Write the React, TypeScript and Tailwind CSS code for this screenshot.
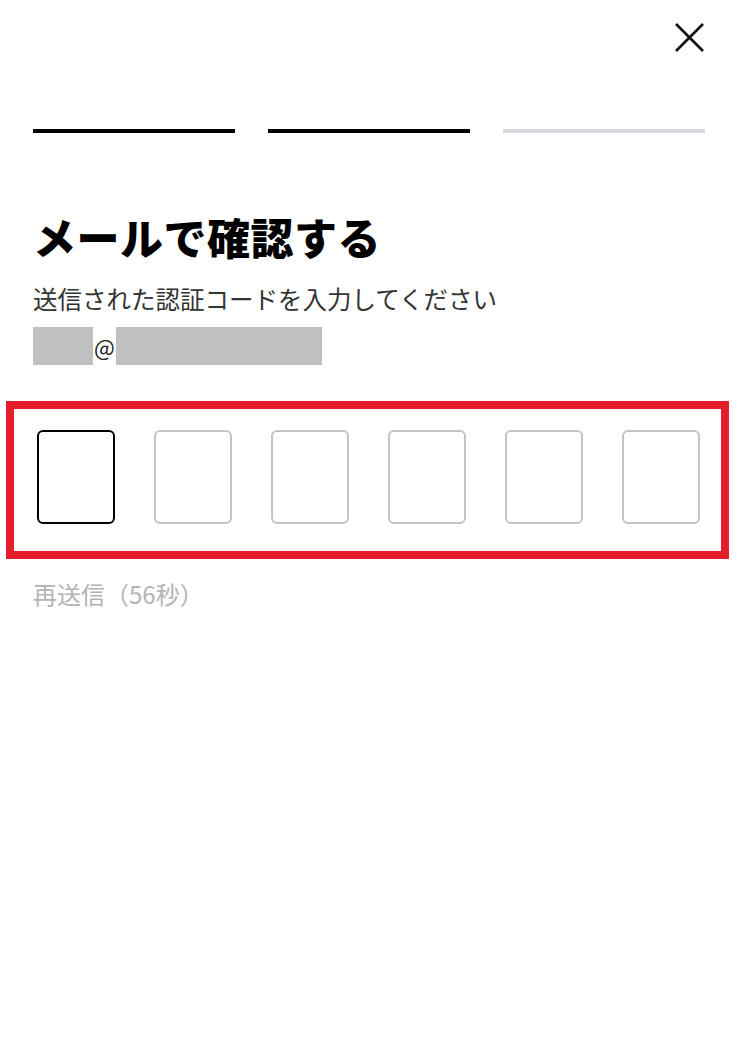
import React from 'react';

const STEPS = [true, true, false];
const CODE_LENGTH = 6;

const CloseIcon: React.FC = () => (
    <svg width="29" height="29" viewBox="0 0 29 29" fill="none" stroke="#111" strokeWidth="2.6" strokeLinecap="butt">
        <path d="M1 1 L28 28" />
        <path d="M28 1 L1 28" />
    </svg>
);

const App: React.FC = () => {
    return (
        <div
            className="min-h-screen w-full bg-white"
            style={{ fontFamily: '"Noto Sans CJK JP", "Noto Sans", sans-serif' }}
        >
            {/* header */}
            <div className="flex justify-end pt-[23px] pr-[34px]">
                <button aria-label="閉じる" className="p-0">
                    <CloseIcon />
                </button>
            </div>

            {/* step progress */}
            <div className="mt-[77px] flex gap-[33px] px-[33px]">
                {STEPS.map((done, i) => (
                    <div key={i} className={`h-[4px] w-[202px] ${done ? 'bg-black' : 'bg-[#d8dce2]'}`} />
                ))}
            </div>

            <div className="px-[33px] pt-[77px]">
                <h1 className="text-[43px] font-black leading-[52px] tracking-[0.5px] text-black">
                    メールで確認する
                </h1>
                <p className="mt-[22px] text-[24.5px] leading-[30px] text-[#333]">
                    送信された認証コードを入力してください
                </p>
                <div className="mt-[13px] flex items-center">
                    <span className="h-[38px] w-[60px] bg-[#c0c0c0]" />
                    <span className="w-[23px] text-center text-[22px] leading-[38px] text-[#222]">@</span>
                    <span className="h-[38px] w-[206px] bg-[#c0c0c0]" />
                </div>
            </div>

            {/* code inputs */}
            <div className="ml-[6px] mt-[36px] w-[723px] border-[8px] border-[#e41f2b] pl-[23px] pr-[21px] pt-[21px] pb-[27px]">
                <div className="flex justify-between">
                    {Array.from({ length: CODE_LENGTH }).map((_, i) => (
                        <div
                            key={i}
                            className={`h-[94px] w-[78px] rounded-[6px] border-2 ${
                                i === 0 ? 'border-black' : 'border-[#c4c4c4]'
                            }`}
                        />
                    ))}
                </div>
            </div>

            <p className="mt-[20px] px-[33px] text-[24px] leading-[30px] text-[#b4b4b4]">
                再送信（56秒）
            </p>
        </div>
    );
};

export default App;
